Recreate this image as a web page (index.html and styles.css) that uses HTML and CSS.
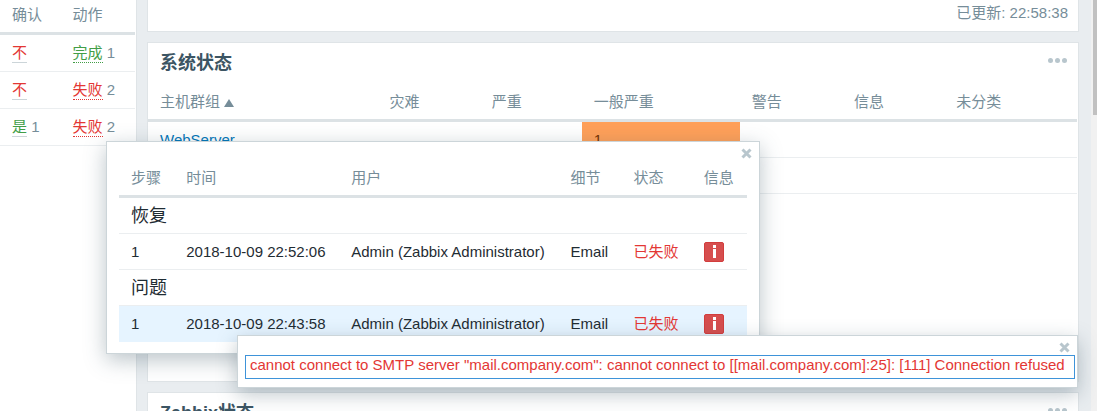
FILE: index.html
```html
<!DOCTYPE html>
<html lang="zh-CN">
<head>
<meta charset="utf-8">
<title>Zabbix</title>
<link rel="stylesheet" href="styles.css">
</head>
<body>
<div class="page">
  <aside class="side">
    <table class="list side-list">
      <thead><tr><th>确认</th><th>动作</th></tr></thead>
      <tbody>
        <tr><td><a class="ack red" href="#">不</a></td><td><a class="act green" href="#">完成</a> <span class="count">1</span></td></tr>
        <tr><td><a class="ack red" href="#">不</a></td><td><a class="act red" href="#">失败</a> <span class="count">2</span></td></tr>
        <tr><td><a class="ack green" href="#">是</a> <span class="count">1</span></td><td><a class="act red" href="#">失败</a> <span class="count">2</span></td></tr>
      </tbody>
    </table>
  </aside>
  <main class="main">
    <section class="card card-foot">已更新: 22:58:38</section>
    <section class="card card-status">
      <header class="card-head">
        <h4>系统状态</h4>
        <button class="dots" type="button" aria-label="菜单"><i></i><i></i><i></i></button>
      </header>
      <table class="list status-list">
        <colgroup><col class="c-group"><col class="c-sev"><col class="c-sev"><col class="c-avg"><col class="c-sev"><col class="c-sev"><col></colgroup>
        <thead><tr><th><a class="sort" href="#">主机群组 <span class="arrow"></span></a></th><th>灾难</th><th>严重</th><th>一般严重</th><th>警告</th><th>信息</th><th>未分类</th></tr></thead>
        <tbody>
          <tr><td><a class="link" href="#">WebServer</a></td><td></td><td></td><td class="average">1</td><td></td><td></td><td></td></tr>
          <tr><td></td><td></td><td></td><td></td><td></td><td></td><td></td></tr>
        </tbody>
      </table>
    </section>
    <section class="card">
      <header class="card-head">
        <h4>Zabbix状态</h4>
        <button class="dots" type="button" aria-label="菜单"><i></i><i></i><i></i></button>
      </header>
    </section>
  </main>
  <div class="track"><div class="thumb"></div></div>
</div>

<div class="popup actions-popup">
  <button class="close" type="button" aria-label="关闭"><svg viewBox="0 0 11 11"><path d="M1.500 1.500l8 8M9.500 1.500l-8 8"/></svg></button>
  <table class="list popup-list">
    <thead><tr><th>步骤</th><th>时间</th><th>用户</th><th>细节</th><th>状态</th><th>信息</th></tr></thead>
    <tbody>
      <tr><td colspan="6" class="group">恢复</td></tr>
      <tr><td>1</td><td>2018-10-09 22:52:06</td><td>Admin (Zabbix Administrator)</td><td>Email</td><td class="red">已失败</td><td><button class="info" type="button" aria-label="信息"><svg viewBox="0 0 18 18"><path d="M8 2h3v3H8zM8 6h3v9H8z"/></svg></button></td></tr>
      <tr><td colspan="6" class="group">问题</td></tr>
      <tr class="selected"><td>1</td><td>2018-10-09 22:43:58</td><td>Admin (Zabbix Administrator)</td><td>Email</td><td class="red">已失败</td><td><button class="info" type="button" aria-label="信息"><svg viewBox="0 0 18 18"><path d="M8 2h3v3H8zM8 6h3v9H8z"/></svg></button></td></tr>
    </tbody>
  </table>
</div>

<div class="popup error-popup">
  <button class="close" type="button" aria-label="关闭"><svg viewBox="0 0 11 11"><path d="M1.500 1.500l8 8M9.500 1.500l-8 8"/></svg></button>
  <div class="message">cannot connect to SMTP server "mail.company.com": cannot connect to [[mail.company.com]:25]: [111] Connection refused</div>
</div>
</body>
</html>
```

FILE: styles.css
```css
* { box-sizing: border-box; }
body {
  margin: 0;
  height: 100vh;
  overflow: hidden;
  position: relative;
  background: #e9edf0;
  color: #1f2c33;
  font: 15px/20px "Liberation Sans", "Noto Sans CJK SC", sans-serif;
}
button { border: 0; padding: 0; background: none; cursor: pointer; }
a { text-decoration: none; }

.page { display: flex; min-height: 100%; }
.side {
  flex: none;
  width: 137px;
  padding-right: 1px;
  background: #fff;
  border-right: 1px solid #dfe4e7;
}
.main {
  flex: 1;
  display: flex;
  flex-direction: column;
  gap: 10px;
  padding: 0 12px 0 10px;
}
.track { flex: none; width: 6px; padding-left: 2px; background: #f1f1f1; }
.thumb { height: 115px; background: #c1c1c1; }

.card { background: #fff; border: 1px solid #dfe4e7; padding-right: 1px; }
.card-foot {
  border-top: 0;
  padding: 3px 10px 8px;
  color: #768d99;
  text-align: right;
}
.card-status { min-height: 340px; }
.card-head {
  display: flex;
  justify-content: space-between;
  padding: 8px 10px 10px 12px;
}
h4 { margin: 0; font-size: 18px; line-height: 24px; color: #3c5563; }
.dots { display: flex; gap: 2px; height: 5px; margin-top: 7px; }
.dots i { width: 5px; height: 5px; border-radius: 50%; background: #b8c6cd; }

.list { border-collapse: separate; border-spacing: 0; width: 100%; }
.list th {
  padding: 5px 13px 7px 12px;
  border-bottom: 3px solid #dce2e5;
  color: #768d99;
  font-weight: normal;
  text-align: left;
  white-space: nowrap;
}
.list td {
  height: 36px;
  padding: 0 13px 0 12px;
  border-bottom: 1px solid #ebeef0;
  white-space: nowrap;
}

.side-list td { height: 37px; }
.ack, .act { display: inline-block; line-height: 18px; }
.ack { border-bottom: 1px solid #ccd5d9; }
.act { border-bottom: 1px dotted; }
.count { color: #768d99; }
.red { color: #e33734; }
.green { color: #429e47; }

.status-list { table-layout: fixed; }
.status-list th { padding-top: 7px; }
.c-group { width: 24.700%; }
.c-sev { width: 11%; }
.c-avg { width: 17%; }
.sort { color: #768d99; }
.arrow {
  display: inline-block;
  border: 5px solid transparent;
  border-top: 0;
  border-bottom: 8px solid #768d99;
}
.link { color: #0275b8; }
.list .average { background: #ffa059; color: #733100; }

.popup {
  position: absolute;
  background: #fff;
  border: 1px solid #ccd5d9;
  box-shadow: 0 6px 20px rgba(60, 85, 99, .35);
}
.actions-popup { left: 106px; top: 141px; min-width: 654px; padding: 21px 12px 11px; }
.error-popup { left: 237px; top: 335px; padding: 19px 2px 8px 7px; }
.close { position: absolute; top: 6px; right: 7px; width: 11px; height: 11px; }
.close svg, .info svg { display: block; }
.close path { stroke: #b8c6cd; stroke-width: 3; }
.list .group { font-size: 18px; }
.selected td { background: #e6f4ff; border-bottom-color: #e6f4ff; }
.info {
  display: block;
  width: 20px;
  height: 20px;
  border: 1px solid #d23d3d;
  border-radius: 2px;
  background: #d64e4e;
}
.info path { fill: #fff; }
.message {
  padding: 0 9px 4px 4px;
  border: 1px solid #3e93d9;
  color: #e33734;
  line-height: 18px;
  white-space: nowrap;
}
```
